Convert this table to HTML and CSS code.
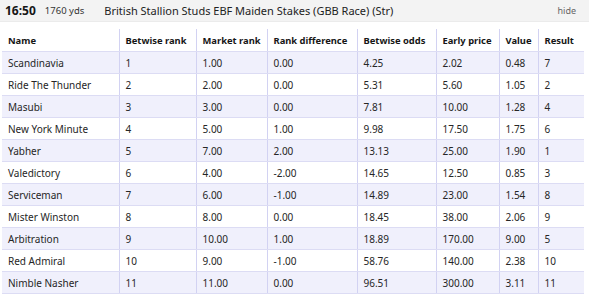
FILE: index.html
```html
<!DOCTYPE html>
<html>
<head>
<meta charset="utf-8">
<link rel="stylesheet" href="styles.css">
</head>
<body>
<div class="bar">
  <span class="time">16:50</span>
  <span class="dist">1760 yds</span>
  <span class="title">British Stallion Studs EBF Maiden Stakes (GBB Race) (Str)</span>
  <span class="hide">hide</span>
</div>
<table class="grid">
  <colgroup>
    <col class="c1"><col class="c2"><col class="c3"><col class="c4"><col class="c5"><col class="c6"><col class="c7"><col class="c8">
  </colgroup>
  <thead>
    <tr><th>Name</th><th>Betwise rank</th><th>Market rank</th><th>Rank difference</th><th>Betwise odds</th><th>Early price</th><th>Value</th><th>Result</th></tr>
  </thead>
  <tbody>
    <tr><td>Scandinavia</td><td>1</td><td>1.00</td><td>0.00</td><td>4.25</td><td>2.02</td><td>0.48</td><td>7</td></tr>
    <tr><td>Ride The Thunder</td><td>2</td><td>2.00</td><td>0.00</td><td>5.31</td><td>5.60</td><td>1.05</td><td>2</td></tr>
    <tr><td>Masubi</td><td>3</td><td>3.00</td><td>0.00</td><td>7.81</td><td>10.00</td><td>1.28</td><td>4</td></tr>
    <tr><td>New York Minute</td><td>4</td><td>5.00</td><td>1.00</td><td>9.98</td><td>17.50</td><td>1.75</td><td>6</td></tr>
    <tr><td>Yabher</td><td>5</td><td>7.00</td><td>2.00</td><td>13.13</td><td>25.00</td><td>1.90</td><td>1</td></tr>
    <tr><td>Valedictory</td><td>6</td><td>4.00</td><td>-2.00</td><td>14.65</td><td>12.50</td><td>0.85</td><td>3</td></tr>
    <tr><td>Serviceman</td><td>7</td><td>6.00</td><td>-1.00</td><td>14.89</td><td>23.00</td><td>1.54</td><td>8</td></tr>
    <tr><td>Mister Winston</td><td>8</td><td>8.00</td><td>0.00</td><td>18.45</td><td>38.00</td><td>2.06</td><td>9</td></tr>
    <tr><td>Arbitration</td><td>9</td><td>10.00</td><td>1.00</td><td>18.89</td><td>170.00</td><td>9.00</td><td>5</td></tr>
    <tr><td>Red Admiral</td><td>10</td><td>9.00</td><td>-1.00</td><td>58.76</td><td>140.00</td><td>2.38</td><td>10</td></tr>
    <tr><td>Nimble Nasher</td><td>11</td><td>11.00</td><td>0.00</td><td>96.51</td><td>300.00</td><td>3.11</td><td>11</td></tr>
  </tbody>
</table>
</body>
</html>
```
FILE: styles.css
```css
html, body {
  margin: 0;
  padding: 0;
  background: #ffffff;
  font-family: "Noto Sans", "DejaVu Sans", sans-serif;
  color: #1f1f1f;
}
.bar {
  display: flex;
  align-items: center;
  height: 21px;
  background: #f3f3f3;
  padding: 0 6px 0 5px;
  border-bottom: 1px solid #ebebeb;
}
.time {
  font-weight: 700;
  font-size: 12px;
  color: #161616;
}
.dist {
  font-size: 9.5px;
  margin-left: 9px;
  color: #333;
}
.title {
  font-size: 11px;
  margin-left: 20px;
  color: #222;
}
.hide {
  margin-left: auto;
  font-size: 9px;
  color: #666;
  margin-right: 7px;
}
.grid {
  border-collapse: collapse;
  margin: 7px 0 0 2px;
  width: 582px;
  table-layout: fixed;
  font-size: 10px;
}
.c1 { width: 117px; }
.c2 { width: 77px; }
.c3 { width: 71px; }
.c4 { width: 90px; }
.c5 { width: 79px; }
.c6 { width: 63px; }
.c7 { width: 39px; }
.c8 { width: 46px; }
.grid th, .grid td {
  text-align: left;
  padding: 0 6px;
  border-left: 1px solid #d2d2f2;
  border-bottom: 1px solid #dcdcf4;
  white-space: nowrap;
  overflow: hidden;
}
.grid th:first-child, .grid td:first-child {
  border-left: none;
}
.grid th {
  height: 22px;
  font-size: 9.4px;
  font-weight: 700;
  color: #161616;
}
.grid td {
  height: 21px;
  color: #262626;
}
.grid tbody tr:nth-child(odd) {
  background: #f0f0fc;
}
```
